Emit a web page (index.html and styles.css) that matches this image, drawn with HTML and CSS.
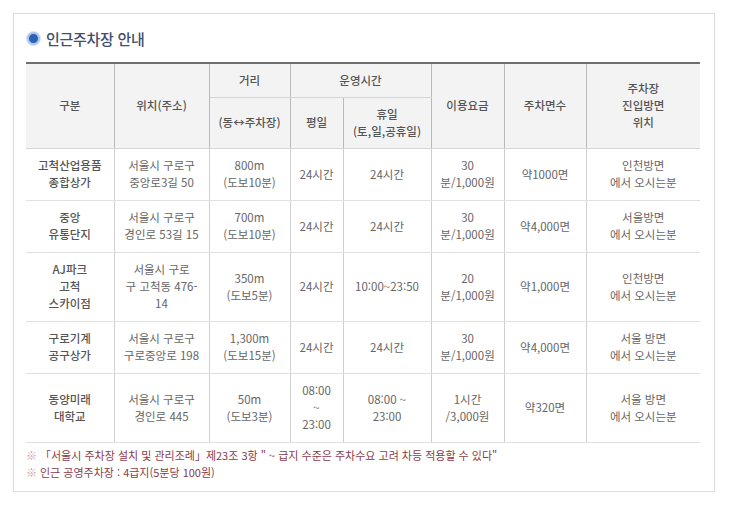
FILE: index.html
```html
<!DOCTYPE html>
<html lang="ko">
<head>
<meta charset="utf-8">
<link rel="stylesheet" href="styles.css">
</head>
<body>
<div class="card">
  <h2 class="title"><span class="dot"></span>인근주차장 안내</h2>
  <table class="tbl">
    <colgroup>
      <col class="c1"><col class="c2"><col class="c3"><col class="c4"><col class="c5"><col class="c6"><col class="c7"><col class="c8">
    </colgroup>
    <thead>
      <tr class="h1">
        <th rowspan="2">구분</th>
        <th rowspan="2">위치(주소)</th>
        <th>거리</th>
        <th colspan="2">운영시간</th>
        <th rowspan="2">이용요금</th>
        <th rowspan="2">주차면수</th>
        <th rowspan="2">주차장<br>진입방면<br>위치</th>
      </tr>
      <tr class="h2">
        <th>(동↔주차장)</th>
        <th>평일</th>
        <th>휴일<br>(토,일,공휴일)</th>
      </tr>
    </thead>
    <tbody>
      <tr class="r2">
        <th>고척산업용품<br>종합상가</th>
        <td>서울시 구로구<br>중앙로3길 50</td>
        <td>800m<br>(도보10분)</td>
        <td>24시간</td>
        <td>24시간</td>
        <td>30<br>분/1,000원</td>
        <td>약1000면</td>
        <td>인천방면<br>에서 오시는분</td>
      </tr>
      <tr class="r2">
        <th>중앙<br>유통단지</th>
        <td>서울시 구로구<br>경인로 53길 15</td>
        <td>700m<br>(도보10분)</td>
        <td>24시간</td>
        <td>24시간</td>
        <td>30<br>분/1,000원</td>
        <td>약4,000면</td>
        <td>서울방면<br>에서 오시는분</td>
      </tr>
      <tr class="r3">
        <th>AJ파크<br>고척<br>스카이점</th>
        <td>서울시 구로<br>구 고척동 476-<br>14</td>
        <td>350m<br>(도보5분)</td>
        <td>24시간</td>
        <td>10:00~23:50</td>
        <td>20<br>분/1,000원</td>
        <td>약1,000면</td>
        <td>인천방면<br>에서 오시는분</td>
      </tr>
      <tr class="r2">
        <th>구로기계<br>공구상가</th>
        <td>서울시 구로구<br>구로중앙로 198</td>
        <td>1,300m<br>(도보15분)</td>
        <td>24시간</td>
        <td>24시간</td>
        <td>30<br>분/1,000원</td>
        <td>약4,000면</td>
        <td>서울 방면<br>에서 오시는분</td>
      </tr>
      <tr class="r3">
        <th>동양미래<br>대학교</th>
        <td>서울시 구로구<br>경인로 445</td>
        <td>50m<br>(도보3분)</td>
        <td>08:00<br>~<br>23:00</td>
        <td>08:00 ~<br>23:00</td>
        <td>1시간<br>/3,000원</td>
        <td>약320면</td>
        <td>서울 방면<br>에서 오시는분</td>
      </tr>
    </tbody>
  </table>
  <ul class="notes">
    <li><span class="mark">※</span>「서울시 주차장 설치 및 관리조례」제23조 3항 " ~ 급지 수준은 주차수요 고려 차등 적용할 수 있다"</li>
    <li><span class="mark">※</span>인근 공영주차장 : 4급지(5분당 100원)</li>
  </ul>
</div>
</body>
</html>
```

FILE: styles.css
```css
html, body {
  margin: 0;
  padding: 0;
  background: #ffffff;
}
body {
  font-family: "Noto Sans CJK KR", "Noto Sans", sans-serif;
  color: #666;
}
.card {
  margin: 13px 0 0 13px;
  width: 700px;
  height: 477px;
  border: 1px solid #dcdcdc;
  padding: 0 12px;
  box-sizing: content-box;
  width: 676px;
}
.title {
  display: flex;
  align-items: center;
  gap: 6px;
  margin: 14px 0 0 1px;
  height: 20px;
  font-size: 15px;
  font-weight: 500;
  color: #3f5070;
  letter-spacing: -0.3px;
}
.dot {
  width: 9px;
  height: 9px;
  border-radius: 50%;
  background: #2a62b8;
  border: 2px solid #a9c4ea;
  box-shadow: 0 0 0 1px #d8e4f5;
}
.tbl {
  margin-top: 14px;
  width: 674px;
  border-collapse: collapse;
  table-layout: fixed;
  font-size: 11.5px;
  text-align: center;
  border-top: 2px solid #6e6e6e;
}
.c1 { width: 88px; }
.c2 { width: 95px; }
.c3 { width: 81px; }
.c4 { width: 53px; }
.c5 { width: 88px; }
.c6 { width: 73px; }
.c7 { width: 82px; }
.c8 { width: 114px; }
.tbl th, .tbl td {
  border: 1px solid #d6d6d6;
  padding: 0 2px;
  line-height: 17px;
  vertical-align: middle;
}
.tbl tr > *:first-child { border-left: none; }
.tbl tr > *:last-child { border-right: none; }
.tbl thead th {
  background: #f3f3f3;
  font-weight: 500;
  color: #555;
  border-left-color: #b9b9b9;
  border-right-color: #b9b9b9;
}
.tbl .h1 { height: 34px; }
.tbl .h2 { height: 51px; }
.tbl tbody th {
  font-weight: 500;
  color: #555;
}
.tbl tbody td, .tbl tbody th {
  border-left-color: #cfcfcf;
  border-right-color: #cfcfcf;
  border-top-color: #e0e0e0;
  border-bottom-color: #e0e0e0;
}
.tbl .r2 { height: 52px; }
.tbl .r3 { height: 69px; }
.notes {
  list-style: none;
  margin: 4px 0 0 0;
  padding: 0;
  font-size: 11px;
  line-height: 17px;
  color: #8a3b4b;
}
.mark {
  color: #c7a1a8;
  margin-right: 3px;
}
```
